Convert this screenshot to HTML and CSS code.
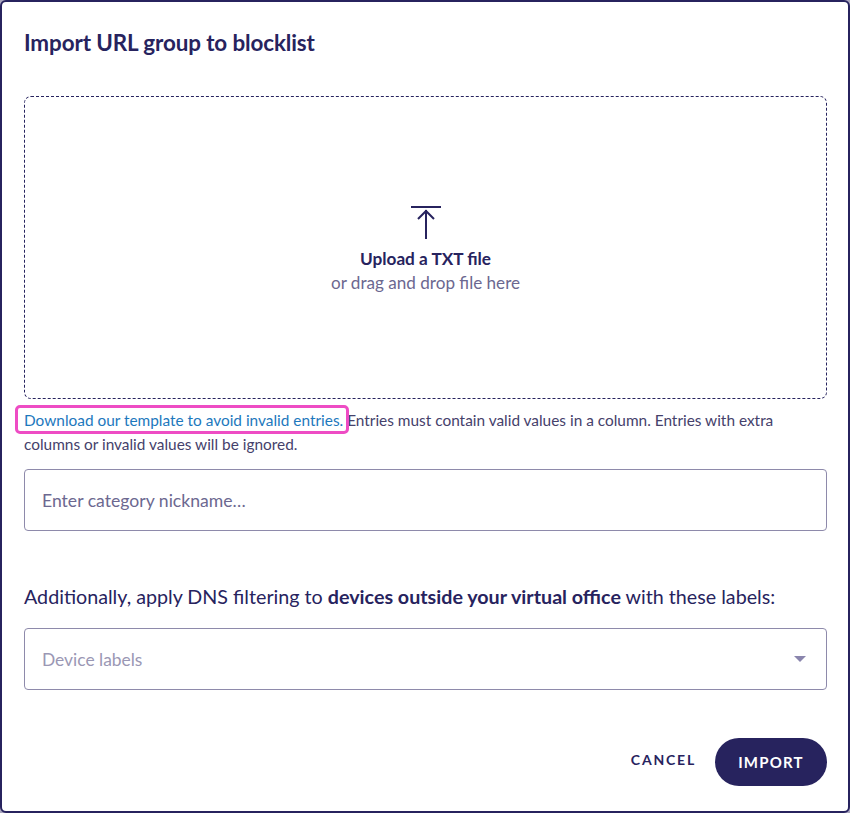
FILE: index.html
```html
<!DOCTYPE html>
<html lang="en">
<head>
<meta charset="utf-8">
<title>Import URL group to blocklist</title>
<link rel="stylesheet" href="styles.css">
</head>
<body>
<div class="dialog">
  <h1 class="title">Import URL group to blocklist</h1>
  <div class="dropzone">
    <svg class="upload-icon" width="30" height="34" viewBox="0 0 30 34" fill="none" stroke="currentColor" stroke-width="2">
      <line x1="0" y1="1" x2="30" y2="1"/>
      <line x1="15" y1="4" x2="15" y2="33"/>
      <polyline points="7,13 15,5 23,13"/>
    </svg>
    <div class="drop-main">Upload a TXT file</div>
    <div class="drop-sub">or drag and drop file here</div>
  </div>
  <p class="help"><span class="link-wrap"><a class="link" href="#">Download our template to avoid invalid entries.</a></span> Entries must contain valid values in a column. Entries with extra columns or invalid values will be ignored.</p>
  <div class="field"><span class="placeholder">Enter category nickname…</span></div>
  <p class="dns-text">Additionally, apply DNS filtering to <strong>devices outside your virtual office</strong> with these labels:</p>
  <div class="field select"><span class="placeholder light">Device labels</span><span class="caret"></span></div>
  <div class="actions">
    <button class="btn-cancel" type="button">CANCEL</button>
    <button class="btn-import" type="button">IMPORT</button>
  </div>
</div>
</body>
</html>
```
FILE: styles.css
```css
html, body {
  margin: 0;
  padding: 0;
}
body {
  background: #aaa6bf;
  width: 850px;
  height: 813px;
  font-family: "Lato", "Liberation Sans", sans-serif;
  color: #27235e;
}
.dialog {
  box-sizing: border-box;
  width: 850px;
  height: 813px;
  background: #fff;
  border: 2px solid #27235e;
  border-radius: 6px;
  padding: 27px 21px 0 22px;
  display: flex;
  flex-direction: column;
}
.title {
  margin: 0;
  font-size: 22.4px;
  line-height: 28px;
  font-weight: 700;
  color: #27235e;
  letter-spacing: -0.1px;
}
.dropzone {
  margin-top: 39px;
  height: 303px;
  box-sizing: border-box;
  border: 1px dashed #27235e;
  border-radius: 7px;
  display: flex;
  flex-direction: column;
  align-items: center;
  justify-content: center;
  padding-top: 6px;
}
.upload-icon {
  color: #27235e;
  display: block;
}
.drop-main {
  margin-top: 7px;
  font-size: 17.2px;
  line-height: 24px;
  font-weight: 700;
  color: #27235e;
}
.drop-sub {
  font-size: 17.1px;
  line-height: 24px;
  color: #6c6890;
}
.help {
  margin: 9px 0 0 0;
  font-size: 15.4px;
  line-height: 24px;
  color: #45416b;
}
.link-wrap {
  position: relative;
}
.link-wrap::after {
  content: "";
  position: absolute;
  left: -9px;
  right: -6px;
  top: -6px;
  bottom: -5px;
  border: 3px solid #ee4cc4;
  border-radius: 5px;
  pointer-events: none;
}
.link {
  color: #1d78bd;
  text-decoration: none;
}
.field {
  margin-top: 13px;
  height: 62px;
  box-sizing: border-box;
  border: 1px solid #8e8aab;
  border-radius: 4px;
  display: flex;
  align-items: center;
  padding: 0 17px;
}
.placeholder {
  font-size: 17.6px;
  color: #6c6890;
}
.placeholder.light {
  font-size: 17.4px;
  color: #9a97b4;
}
.dns-text {
  margin: 53px 0 0 0;
  font-size: 19.7px;
  line-height: 26px;
  color: #27235e;
}
.dns-text strong {
  font-weight: 700;
}
.select {
  margin-top: 18px;
  justify-content: space-between;
  padding-right: 20px;
}
.caret {
  width: 0;
  height: 0;
  border-left: 6px solid transparent;
  border-right: 6px solid transparent;
  border-top: 6px solid #8a85ad;
}
.actions {
  margin-top: 48px;
  display: flex;
  justify-content: flex-end;
  align-items: flex-start;
  gap: 19px;
}
.btn-cancel {
  font-family: inherit;
  background: none;
  border: none;
  padding: 0;
  margin-top: 12px;
  height: 18px;
  font-size: 14px;
  font-weight: 700;
  letter-spacing: 1.8px;
  color: #27235e;
}
.btn-import {
  font-family: inherit;
  width: 112px;
  height: 48px;
  border: none;
  border-radius: 24px;
  background: #27235e;
  color: #fff;
  font-size: 15px;
  font-weight: 700;
  letter-spacing: 1.2px;
  padding: 0;
}
```
